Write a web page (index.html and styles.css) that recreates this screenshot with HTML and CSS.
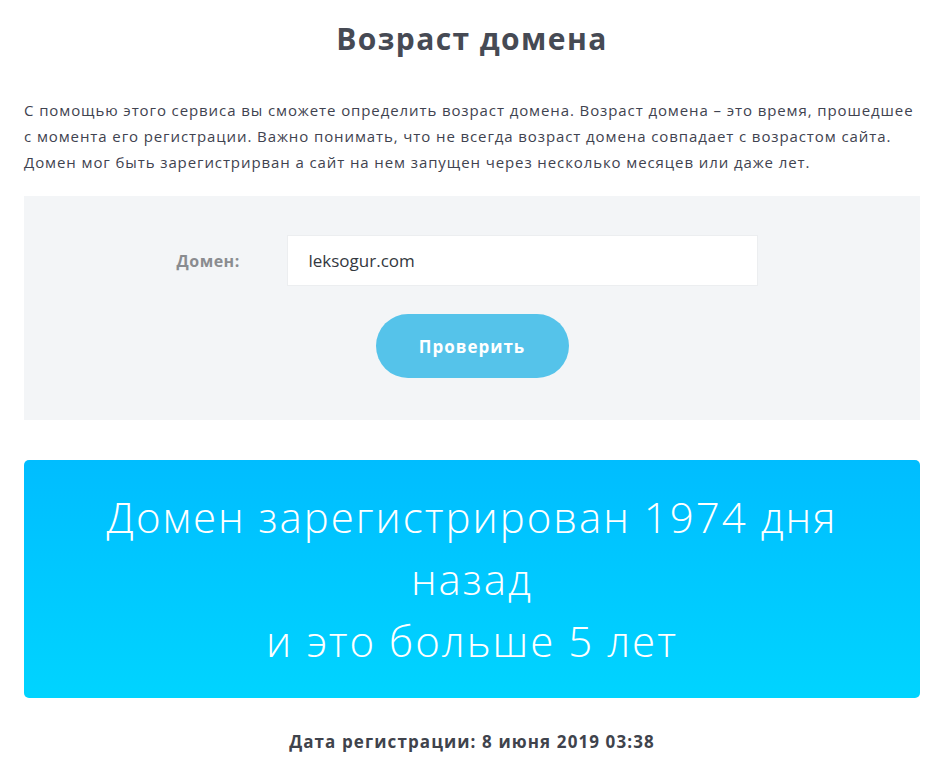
FILE: index.html
```html
<!DOCTYPE html>
<html lang="ru">
<head>
<meta charset="utf-8">
<title>Возраст домена</title>
<link rel="stylesheet" href="styles.css">
</head>
<body>
<div class="page">
  <h1 class="title">Возраст домена</h1>
  <p class="intro">С помощью этого сервиса вы сможете определить возраст домена. Возраст домена – это время, прошедшее с момента его регистрации. Важно понимать, что не всегда возраст домена совпадает с возрастом сайта. Домен мог быть зарегистрирван а сайт на нем запущен через несколько месяцев или даже лет.</p>
  <form class="panel">
    <div class="row">
      <label class="label" for="domain">Домен:</label>
      <input class="input" id="domain" type="text" value="leksogur.com">
    </div>
    <button class="btn" type="button">Проверить</button>
  </form>
  <div class="result">
    <div class="result-text">Домен зарегистрирован 1974 дня<br>назад<br>и это больше 5 лет</div>
  </div>
  <div class="date">Дата регистрации: 8 июня 2019 03:38</div>
</div>
</body>
</html>
```
FILE: styles.css
```css
html, body {
  margin: 0;
  padding: 0;
  background: #ffffff;
}
.page {
  width: 896px;
  margin-left: 24px;
  font-family: "Open Sans", "Noto Sans", sans-serif;
  color: #3b3f4a;
}
.title {
  margin: 0;
  padding-top: 20px;
  height: 62px;
  text-align: center;
  font-size: 30px;
  font-weight: 700;
  letter-spacing: 1.4px;
  line-height: 38px;
  color: #464a54;
  box-sizing: border-box;
}
.intro {
  margin: 35px 0 0 0;
  font-size: 15px;
  letter-spacing: 0.9px;
  line-height: 26px;
  color: #3f4350;
}
.panel {
  margin-top: 21px;
  height: 224px;
  background: #f3f5f7;
  display: flex;
  flex-direction: column;
  align-items: center;
  padding-top: 39px;
  box-sizing: border-box;
}
.row {
  display: flex;
  align-items: center;
  margin-left: -10px;
}
.label {
  width: 110px;
  font-size: 16px;
  font-weight: 700;
  letter-spacing: 0.5px;
  color: #8a8c90;
}
.input {
  width: 471px;
  height: 51px;
  box-sizing: border-box;
  border: 1px solid #eceef0;
  background: #ffffff;
  padding: 0 21px;
  font-family: "Open Sans", sans-serif;
  font-size: 17px;
  color: #333840;
  outline: none;
}
.btn {
  margin-top: 28px;
  width: 193px;
  height: 64px;
  border: none;
  border-radius: 32px;
  background: #55c3ea;
  color: #ffffff;
  font-family: "Open Sans", sans-serif;
  font-size: 17px;
  font-weight: 700;
  letter-spacing: 1px;
  cursor: pointer;
}
.result {
  margin-top: 40px;
  height: 238px;
  border-radius: 5px;
  background: linear-gradient(180deg, #00bdff 0%, #00d4ff 100%);
  display: flex;
  align-items: center;
  justify-content: center;
}
.result-text {
  text-align: center;
  color: #ffffff;
  font-size: 42px;
  font-weight: 300;
  letter-spacing: 2px;
  line-height: 62px;
}
.date {
  margin-top: 32px;
  text-align: center;
  font-size: 17px;
  font-weight: 700;
  letter-spacing: 1.1px;
  color: #3f434c;
}
```
